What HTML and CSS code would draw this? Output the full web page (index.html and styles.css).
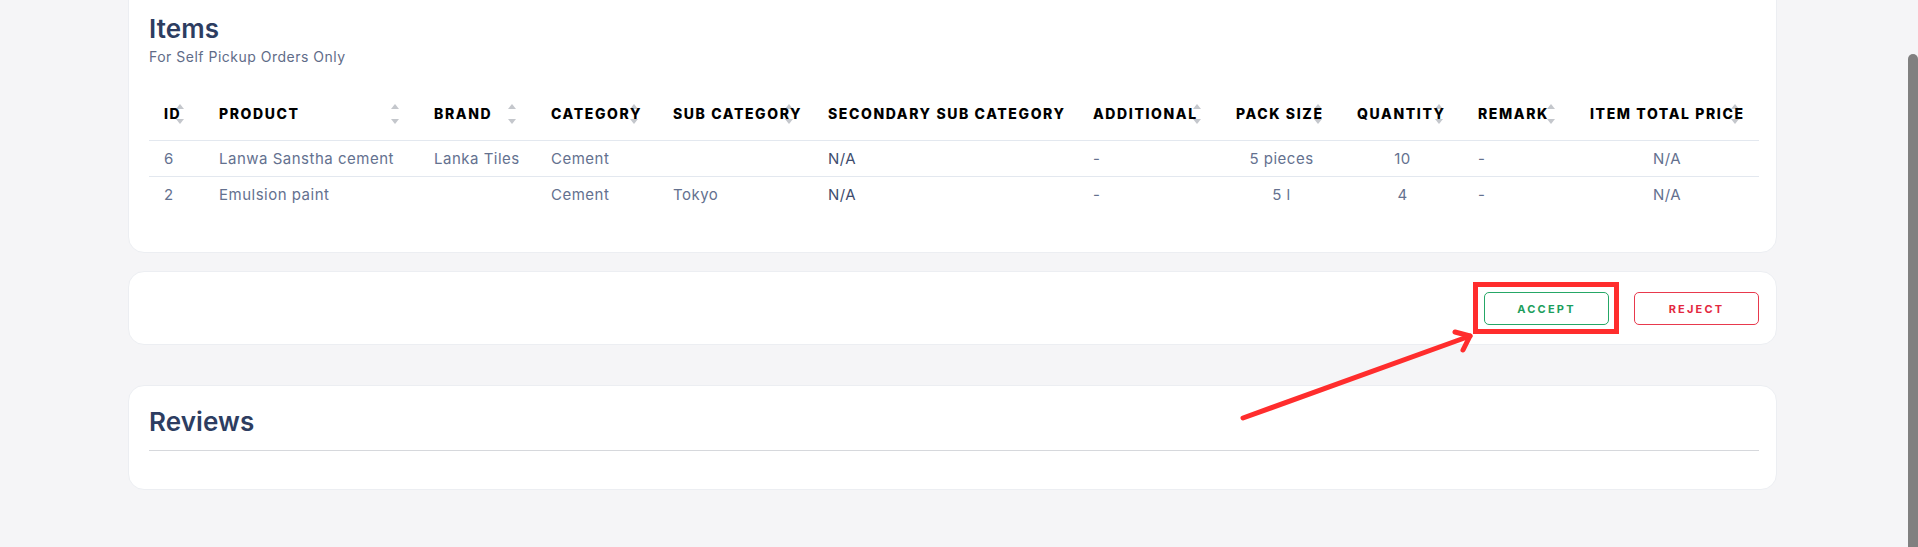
FILE: index.html
```html
<!DOCTYPE html>
<html lang="en">
<head>
<meta charset="utf-8">
<title>Order Items</title>
<link rel="stylesheet" href="styles.css">
</head>
<body>
<main class="page">
  <section class="card items-card">
    <h2 class="card-title">Items</h2>
    <p class="card-sub">For Self Pickup Orders Only</p>
    <table class="items-table">
      <colgroup>
        <col class="c-id"><col class="c-product"><col class="c-brand"><col class="c-cat"><col class="c-sub"><col class="c-sec"><col class="c-add"><col class="c-pack"><col class="c-qty"><col class="c-rem"><col class="c-total">
      </colgroup>
      <thead>
        <tr>
          <th><div class="th-in"><span class="th-t">ID</span><span class="sorter"><svg viewBox="0 0 8 20" width="8" height="20"><path d="M0 5 L4 0 L8 5Z"/><path d="M0 15 L4 20 L8 15Z"/></svg></span></div></th>
          <th><div class="th-in"><span class="th-t">PRODUCT</span><span class="sorter"><svg viewBox="0 0 8 20" width="8" height="20"><path d="M0 5 L4 0 L8 5Z"/><path d="M0 15 L4 20 L8 15Z"/></svg></span></div></th>
          <th><div class="th-in"><span class="th-t">BRAND</span><span class="sorter"><svg viewBox="0 0 8 20" width="8" height="20"><path d="M0 5 L4 0 L8 5Z"/><path d="M0 15 L4 20 L8 15Z"/></svg></span></div></th>
          <th><div class="th-in"><span class="th-t">CATEGORY</span><span class="sorter"><svg viewBox="0 0 8 20" width="8" height="20"><path d="M0 5 L4 0 L8 5Z"/><path d="M0 15 L4 20 L8 15Z"/></svg></span></div></th>
          <th><div class="th-in"><span class="th-t">SUB CATEGORY</span><span class="sorter"><svg viewBox="0 0 8 20" width="8" height="20"><path d="M0 5 L4 0 L8 5Z"/><path d="M0 15 L4 20 L8 15Z"/></svg></span></div></th>
          <th><div class="th-in"><span class="th-t">SECONDARY SUB CATEGORY</span></div></th>
          <th><div class="th-in"><span class="th-t">ADDITIONAL</span><span class="sorter"><svg viewBox="0 0 8 20" width="8" height="20"><path d="M0 5 L4 0 L8 5Z"/><path d="M0 15 L4 20 L8 15Z"/></svg></span></div></th>
          <th><div class="th-in"><span class="th-t">PACK SIZE</span><span class="sorter"><svg viewBox="0 0 8 20" width="8" height="20"><path d="M0 5 L4 0 L8 5Z"/><path d="M0 15 L4 20 L8 15Z"/></svg></span></div></th>
          <th><div class="th-in"><span class="th-t">QUANTITY</span><span class="sorter"><svg viewBox="0 0 8 20" width="8" height="20"><path d="M0 5 L4 0 L8 5Z"/><path d="M0 15 L4 20 L8 15Z"/></svg></span></div></th>
          <th><div class="th-in"><span class="th-t">REMARK</span><span class="sorter"><svg viewBox="0 0 8 20" width="8" height="20"><path d="M0 5 L4 0 L8 5Z"/><path d="M0 15 L4 20 L8 15Z"/></svg></span></div></th>
          <th><div class="th-in"><span class="th-t">ITEM TOTAL PRICE</span><span class="sorter"><svg viewBox="0 0 8 20" width="8" height="20"><path d="M0 5 L4 0 L8 5Z"/><path d="M0 15 L4 20 L8 15Z"/></svg></span></div></th>
        </tr>
      </thead>
      <tbody>
        <tr>
          <td>6</td>
          <td>Lanwa Sanstha cement</td>
          <td>Lanka Tiles</td>
          <td>Cement</td>
          <td></td>
          <td class="dark">N/A</td>
          <td>-</td>
          <td class="center">5 pieces</td>
          <td class="center">10</td>
          <td>-</td>
          <td class="center">N/A</td>
        </tr>
        <tr>
          <td>2</td>
          <td>Emulsion paint</td>
          <td></td>
          <td>Cement</td>
          <td>Tokyo</td>
          <td class="dark">N/A</td>
          <td>-</td>
          <td class="center">5 l</td>
          <td class="center">4</td>
          <td>-</td>
          <td class="center">N/A</td>
        </tr>
      </tbody>
    </table>
  </section>

  <section class="card actions-card">
    <div class="actions">
      <button class="btn btn-accept">ACCEPT</button>
      <button class="btn btn-reject">REJECT</button>
    </div>
  </section>

  <section class="card reviews-card">
    <h2 class="card-title">Reviews</h2>
    <div class="divider"></div>
  </section>
</main>

<div class="highlight-box"></div>
<svg class="annot-arrow" width="1918" height="547" viewBox="0 0 1918 547">
  <g stroke="#ff2d2d" stroke-width="5" stroke-linecap="round" stroke-linejoin="round" fill="none">
    <path d="M1243 418 L1470 336"/>
    <path d="M1455 332 L1470 336 L1463 350"/>
  </g>
</svg>
<div class="scroll-thumb"></div>
</body>
</html>
```

FILE: styles.css
```css
* { box-sizing: border-box; }

html, body {
  margin: 0;
  padding: 0;
  height: 547px;
  overflow: hidden;
}

body {
  background: #f5f5f7;
  font-family: "Inter", "Open Sans", "Liberation Sans", sans-serif;
  color: #5f6c88;
}

.page {
  margin-top: -20px;
  padding-left: 128px;
  width: 1777px;
  display: flex;
  flex-direction: column;
}

.card {
  background: #ffffff;
  border: 1px solid #eceef2;
  border-radius: 16px;
}

.items-card {
  padding: 31px 17px 40px 20px;
}

.card-title {
  margin: 0;
  font-size: 26px;
  line-height: 34px;
  font-weight: 600;
  color: #2d3d61;
  letter-spacing: 0.1px;
}

.card-sub {
  margin: 1px 0 0;
  font-size: 14px;
  line-height: 20px;
  color: #5f6c88;
  letter-spacing: 0.5px;
}

.items-table {
  margin-top: 19px;
  width: 1610px;
  table-layout: fixed;
  border-collapse: collapse;
}

.c-id { width: 55px; }
.c-product { width: 215px; }
.c-brand { width: 117px; }
.c-cat { width: 122px; }
.c-sub { width: 155px; }
.c-sec { width: 265px; }
.c-add { width: 143px; }
.c-pack { width: 121px; }
.c-qty { width: 121px; }
.c-rem { width: 112px; }
.c-total { width: 184px; }

.items-table th {
  height: 54px;
  padding: 2px 16px 0 15px;
  text-align: left;
  border-bottom: 1px solid #e3e8ef;
  font-size: 14px;
  font-weight: 800;
  color: #000000;
  letter-spacing: 1.6px;
  white-space: nowrap;
}

.th-in {
  display: flex;
  align-items: center;
  justify-content: space-between;
}

.th-t {
  flex: 0 1 auto;
  min-width: 0;
  position: relative;
  z-index: 1;
}

.sorter {
  flex: 0 0 auto;
  display: flex;
  margin-left: 0;
  margin-right: 4px;
}

.sorter svg { display: block; fill: #c4c7cc; }

.items-table td {
  height: 36px;
  padding: 0 16px 0 15px;
  font-size: 15px;
  color: #64718f;
  letter-spacing: 0.5px;
  border-bottom: 1px solid #e3e8ef;
  white-space: nowrap;
}

.items-table tbody tr:last-child td { border-bottom: none; }

.items-table td.center { text-align: center; padding: 0; }
.items-table td.dark { color: #3f4d6e; }

.actions-card {
  margin-top: 18px;
  padding: 20px 17px 19px 20px;
}

.actions {
  display: flex;
  justify-content: flex-end;
  gap: 25px;
}

.btn {
  width: 125px;
  height: 33px;
  background: #ffffff;
  border-radius: 5px;
  font-family: "Inter", "Open Sans", sans-serif;
  font-size: 11px;
  font-weight: 700;
  letter-spacing: 2.2px;
  cursor: pointer;
}

.btn-accept { border: 1px solid #25a766; color: #1c9e5c; }
.btn-reject { border: 1px solid #e8394d; color: #e3283f; }

.reviews-card {
  margin-top: 40px;
  padding: 19px 17px 38px 20px;
}

.divider {
  margin-top: 11px;
  height: 1px;
  background: #d6d8dc;
}

.highlight-box {
  position: absolute;
  left: 1473px;
  top: 282px;
  width: 146px;
  height: 52px;
  border: 5px solid #ff2d2d;
}

.annot-arrow {
  position: absolute;
  left: 0;
  top: 0;
  pointer-events: none;
}

.scroll-thumb {
  position: fixed;
  right: 0;
  top: 54px;
  width: 10px;
  height: 500px;
  background: #808080;
  border-radius: 5px 5px 0 0;
}
```
